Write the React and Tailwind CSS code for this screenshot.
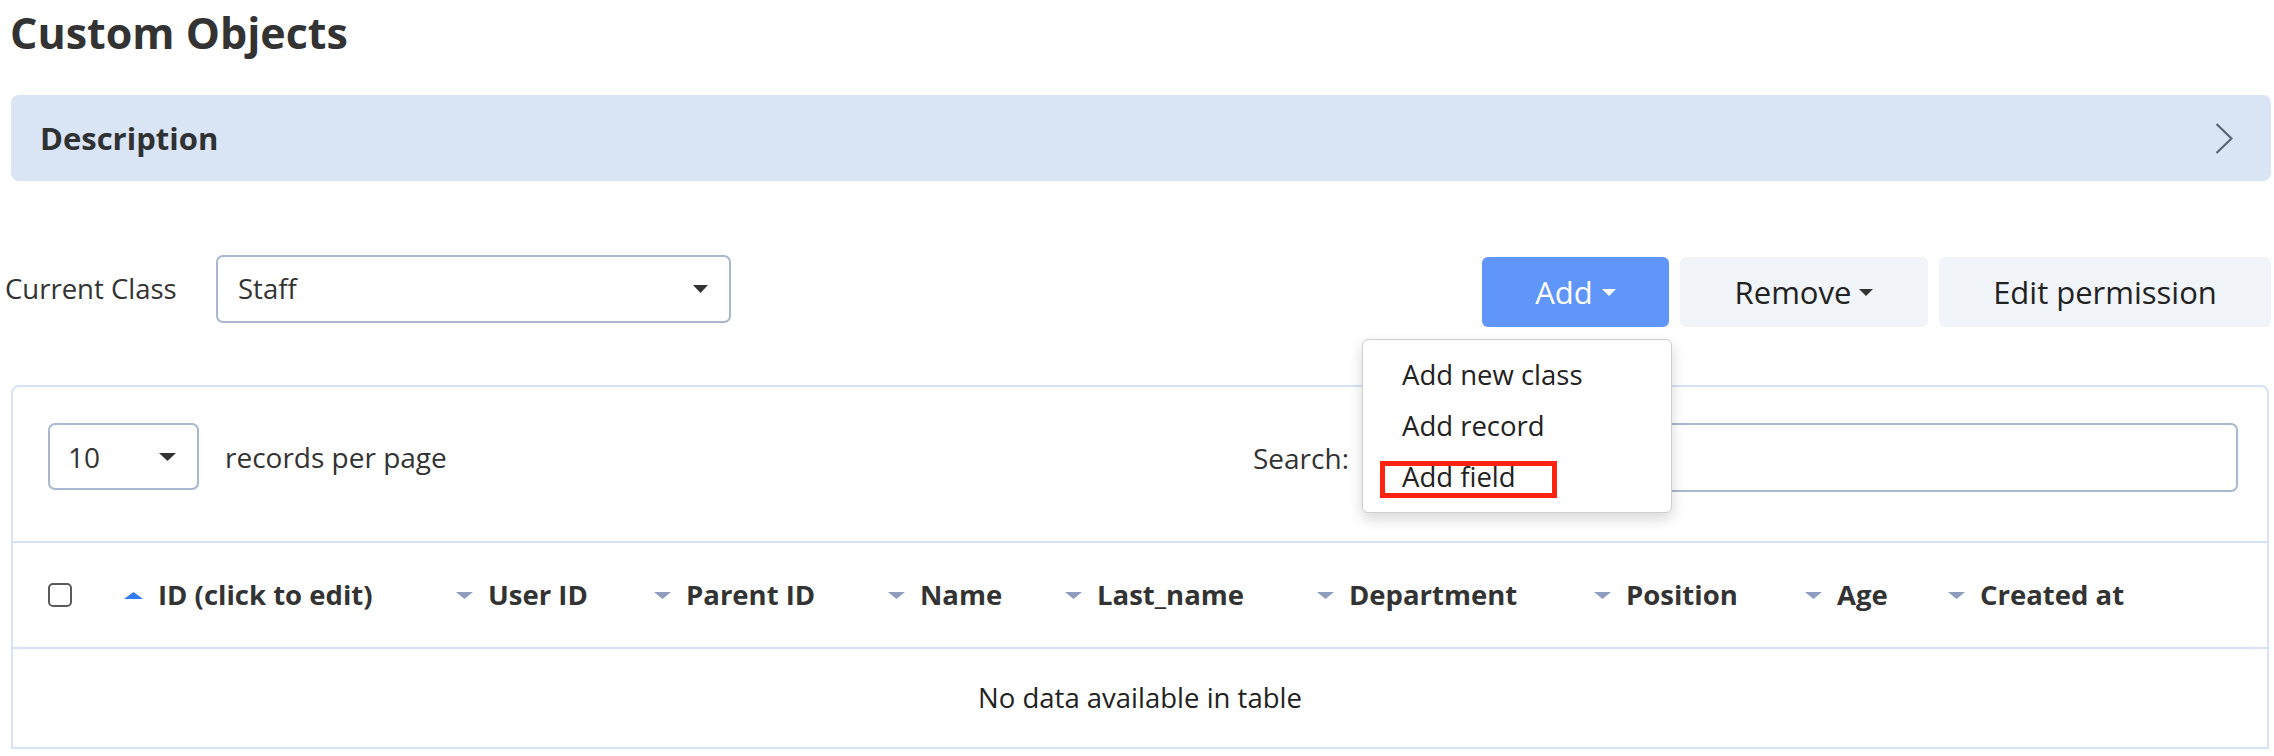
import React from 'react';

const columns = [
  { label: 'ID (click to edit)', w: 'w-[332px]', active: true },
  { label: 'User ID', w: 'w-[198px]' },
  { label: 'Parent ID', w: 'w-[234px]' },
  { label: 'Name', w: 'w-[177px]' },
  { label: 'Last_name', w: 'w-[252px]' },
  { label: 'Department', w: 'w-[277px]' },
  { label: 'Position', w: 'w-[211px]' },
  { label: 'Age', w: 'w-[143px]' },
  { label: 'Created at', w: 'flex-1' },
];

const Caret = ({ w = 14, h = 7, color = '#333', up = false }) => (
  <svg width={w} height={h} viewBox={`0 0 ${w} ${h}`} className="shrink-0">
    <polygon points={up ? `0,${h} ${w},${h} ${w / 2},0` : `0,0 ${w},0 ${w / 2},${h}`} fill={color} />
  </svg>
);

const App = () => {
  return (
    <div className="w-[2274px] h-[756px] overflow-hidden bg-white text-[#333] font-['Open_Sans',sans-serif]">
      {/* Title */}
      <h1 className="pt-[12px] pl-[10px] text-[43px] leading-[42px] font-bold text-[#333]">Custom Objects</h1>

      {/* Description */}
      <div className="mt-[41px] ml-[11px] mr-[3px] h-[86px] rounded-[8px] bg-[#d9e4f5] flex items-center justify-between pl-[29px] pr-[38px]">
        <span className="text-[31px] font-bold text-[#2f3133]">Description</span>
        <svg width="18" height="31" viewBox="0 0 18 31" fill="none">
          <polyline points="1.5,1 16.5,15.5 1.5,30" stroke="#5b6373" strokeWidth="2.2" />
        </svg>
      </div>

      {/* Controls */}
      <div className="mt-[74px] h-[72px] pl-[5px] pr-[3px] flex items-start justify-between">
        <div className="flex items-center h-[68px]">
          <span className="w-[211px] text-[27.5px] text-[#333]">Current Class</span>
          <div className="w-[515px] h-[68px] border-2 border-[#a9b7d0] rounded-[7px] flex items-center justify-between pl-[20px] pr-[21px]">
            <span className="text-[27.5px] text-[#333]">Staff</span>
            <Caret w={15} h={8} color="#333" />
          </div>
        </div>

        <div className="mt-[2px] flex gap-[11px]">
          <div className="relative">
            <button className="w-[187px] h-[70px] rounded-[6px] bg-[#6095f9] text-white text-[31px] flex items-center justify-center gap-[9px]">
              Add
              <Caret w={14} h={7} color="#fff" />
            </button>

            {/* Dropdown menu */}
            <div className="absolute top-[82px] right-[-3px] w-[310px] h-[174px] bg-white border border-[#cfcfcf] rounded-[6px] shadow-[0_6px_14px_rgba(0,0,0,0.16)] pt-[9px] z-10">
              <div className="h-[51px] leading-[51px] pl-[39px] text-[27.5px] text-[#222]">Add new class</div>
              <div className="h-[51px] leading-[51px] pl-[39px] text-[27.5px] text-[#222]">Add record</div>
              <div className="relative h-[51px] leading-[51px] pl-[39px] text-[27.5px] text-[#222]">
                Add field
                <div className="absolute left-[17px] top-[10px] w-[177px] h-[37px] border-[5px] border-[#ff2412]"></div>
              </div>
            </div>
          </div>
          <button className="w-[248px] h-[70px] rounded-[6px] bg-[#f1f4f8] text-[#222] text-[31px] flex items-center justify-center gap-[8px]">
            Remove
            <Caret w={14} h={7} color="#333" />
          </button>
          <button className="w-[332px] h-[70px] rounded-[6px] bg-[#f1f4f8] text-[#222] text-[31px] flex items-center justify-center">
            Edit permission
          </button>
        </div>
      </div>

      {/* Table card */}
      <div className="mt-[58px] ml-[11px] mr-[5px] border-2 border-b-0 border-[#d6e2f8] rounded-t-[8px]">
        <div className="h-[154px] flex items-start justify-between pt-[36px] pl-[35px] pr-[29px]">
          <div className="flex items-center h-[67px]">
            <div className="w-[151px] h-[67px] border-2 border-[#a9b7d0] rounded-[7px] flex items-center justify-between pl-[18px] pr-[21px]">
              <span className="text-[28px] text-[#333]">10</span>
              <Caret w={17} h={8} color="#333" />
            </div>
            <span className="ml-[26px] text-[28px] text-[#333]">records per page</span>
          </div>
          <div className="flex items-center h-[69px]">
            <span className="text-[28px] text-[#333] mr-[13px]">Search:</span>
            <div className="w-[876px] h-[69px] border-2 border-[#a9b7d0] rounded-[7px]"></div>
          </div>
        </div>

        {/* Header row */}
        <div className="h-[106px] border-t-2 border-[#d6e2f8] flex items-center">
          <div className="w-[111px] pl-[35px] flex items-center">
            <div className="w-[24px] h-[24px] border-2 border-[#5a5a5a] rounded-[5px]"></div>
          </div>
          {columns.map((c) => (
            <div key={c.label} className={`${c.w} flex items-center gap-[15px]`}>
              {c.active ? <Caret w={19} h={7} color="#2f7cf6" up /> : <Caret w={17} h={7} color="#8e9dbd" />}
              <span className="text-[27.5px] font-bold text-[#333] whitespace-nowrap">{c.label}</span>
            </div>
          ))}
        </div>

        {/* Body */}
        <div className="h-[102px] border-t-2 border-b-2 border-[#d6e2f8] flex items-center justify-center">
          <span className="text-[27.5px] text-[#222]">No data available in table</span>
        </div>
      </div>
    </div>
  );
};

export default App;
